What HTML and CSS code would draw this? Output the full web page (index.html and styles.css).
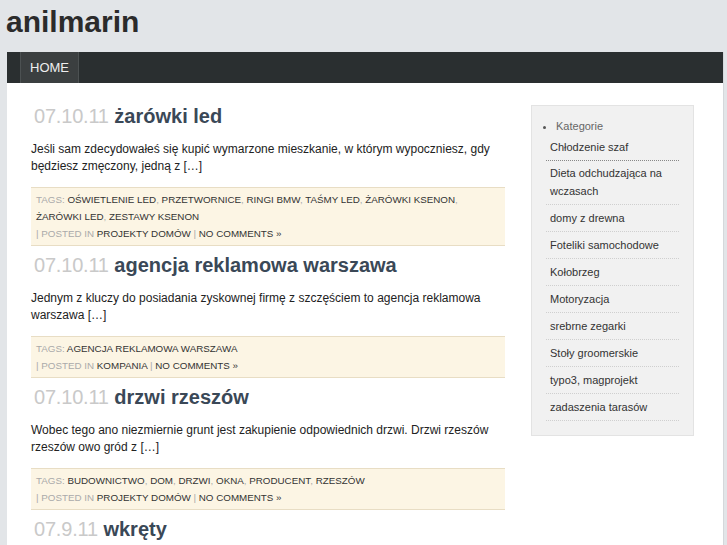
FILE: index.html
```html
<!DOCTYPE html>
<html lang="pl">
<head>
<meta charset="utf-8">
<title>anilmarin</title>
<link rel="stylesheet" href="styles.css">
</head>
<body>
<header class="site-header">
  <h1 class="site-title">anilmarin</h1>
</header>
<div class="page">
  <nav class="nav">
    <a class="nav-item active" href="#">HOME</a>
  </nav>
  <div class="main">
    <div class="posts">
      <article class="post">
        <h2 class="post-title"><span class="date">07.10.11</span> <a href="#">żarówki led</a></h2>
        <p class="excerpt">Jeśli sam zdecydowałeś się kupić wymarzone mieszkanie, w którym wypoczniesz, gdy będziesz zmęczony, jedną z […]</p>
        <div class="meta">
          <span class="label">TAGS:</span> <a href="#">OŚWIETLENIE LED</a>, <a href="#">PRZETWORNICE</a>, <a href="#">RINGI BMW</a>, <a href="#">TAŚMY LED</a>, <a href="#">ŻARÓWKI KSENON</a>, <a href="#">ŻARÓWKI LED</a>, <a href="#">ZESTAWY KSENON</a><br>
          <span class="label">| POSTED IN</span> <a href="#">PROJEKTY DOMÓW</a> | <a href="#">NO COMMENTS »</a>
        </div>
      </article>
      <article class="post">
        <h2 class="post-title"><span class="date">07.10.11</span> <a href="#">agencja reklamowa warszawa</a></h2>
        <p class="excerpt">Jednym z kluczy do posiadania zyskownej firmę z szczęściem to agencja reklamowa warszawa […]</p>
        <div class="meta">
          <span class="label">TAGS:</span> <a href="#">AGENCJA REKLAMOWA WARSZAWA</a><br>
          <span class="label">| POSTED IN</span> <a href="#">KOMPANIA</a> | <a href="#">NO COMMENTS »</a>
        </div>
      </article>
      <article class="post">
        <h2 class="post-title"><span class="date">07.10.11</span> <a href="#">drzwi rzeszów</a></h2>
        <p class="excerpt">Wobec tego ano niezmiernie grunt jest zakupienie odpowiednich drzwi. Drzwi rzeszów rzeszów owo gród z […]</p>
        <div class="meta">
          <span class="label">TAGS:</span> <a href="#">BUDOWNICTWO</a>, <a href="#">DOM</a>, <a href="#">DRZWI</a>, <a href="#">OKNA</a>, <a href="#">PRODUCENT</a>, <a href="#">RZESZÓW</a><br>
          <span class="label">| POSTED IN</span> <a href="#">PROJEKTY DOMÓW</a> | <a href="#">NO COMMENTS »</a>
        </div>
      </article>
      <article class="post">
        <h2 class="post-title"><span class="date">07.9.11</span> <a href="#">wkręty</a></h2>
      </article>
    </div>
    <aside class="sidebar">
      <ul class="widgets">
        <li class="widget">
          <span class="widget-title">Kategorie</span>
          <ul class="cats">
            <li><a href="#">Chłodzenie szaf</a></li>
            <li><a href="#">Dieta odchudzająca na wczasach</a></li>
            <li><a href="#">domy z drewna</a></li>
            <li><a href="#">Foteliki samochodowe</a></li>
            <li><a href="#">Kołobrzeg</a></li>
            <li><a href="#">Motoryzacja</a></li>
            <li><a href="#">srebrne zegarki</a></li>
            <li><a href="#">Stoły groomerskie</a></li>
            <li><a href="#">typo3, magprojekt</a></li>
            <li><a href="#">zadaszenia tarasów</a></li>
          </ul>
        </li>
      </ul>
    </aside>
  </div>
</div>
</body>
</html>
```
FILE: styles.css
```css
html, body {
  margin: 0;
  padding: 0;
  background: #e2e5e8;
  font-family: "Liberation Sans", Arial, sans-serif;
  color: #222;
}
a { text-decoration: none; color: inherit; }

.site-header {
  height: 52px;
  padding: 0 0 0 6px;
}
.site-title {
  margin: 0;
  padding-top: 5px;
  font-size: 30px;
  line-height: 34px;
  font-weight: bold;
  color: #2b2b2b;
}

.page {
  margin-left: 7px;
  width: 716px;
  height: 493px;
  background: #fff;
  border-right: 1px solid #d5d8db;
  overflow: hidden;
}

.nav {
  display: flex;
  height: 31px;
  background: #2a2f30;
  padding-left: 13px;
}
.nav-item {
  display: flex;
  align-items: center;
  padding: 0 9px;
  font-size: 13px;
  color: #eee;
  background: #3b3f40;
  border-left: 1px solid #4c5152;
  border-right: 1px solid #4c5152;
}

.main {
  display: flex;
  align-items: flex-start;
  gap: 26px;
  padding: 20px 29px 0 24px;
}

.posts {
  width: 474px;
  flex: none;
}
.post-title {
  margin: 0;
  font-size: 20px;
  line-height: 26px;
  font-weight: bold;
  color: #3a4857;
  padding-left: 3px;
}
.post-title .date {
  font-weight: normal;
  color: #c9c9c9;
  letter-spacing: -0.2px;
}
.excerpt {
  margin: 12px 0 12px;
  font-size: 12px;
  line-height: 17px;
  color: #222;
}
.meta {
  background: #fcf5e4;
  border-top: 1px solid #e8ddc4;
  border-bottom: 1px solid #e8ddc4;
  padding: 3px 5px 3px;
  font-size: 9.8px;
  line-height: 17px;
  color: #aaa;
  margin-bottom: 6px;
}
.meta a { color: #333; }
.meta .label { color: #aaa; }

.sidebar {
  width: 163px;
  flex: none;
  box-sizing: border-box;
  margin-top: 2px;
  background: #f1f1f1;
  border: 1px solid #e3e3e3;
  padding: 13px 14px 14px 14px;
}
.widgets {
  list-style: disc;
  margin: 0;
  padding: 0 0 0 10px;
  color: #555;
  font-size: 11px;
}
.widget-title {
  display: block;
  line-height: 15px;
  color: #666;
}
.cats {
  list-style: none;
  margin: 0 0 0 -10px;
  padding: 0;
}
.cats li {
  padding: 4px 4px;
  line-height: 18px;
  font-size: 11px;
  color: #333;
  border-bottom: 1px dotted #cfcfcf;
}
.cats li:nth-child(2) {
  line-height: 17.5px;
}
.cats li:first-child {
  border-bottom-color: #888;
}
```
